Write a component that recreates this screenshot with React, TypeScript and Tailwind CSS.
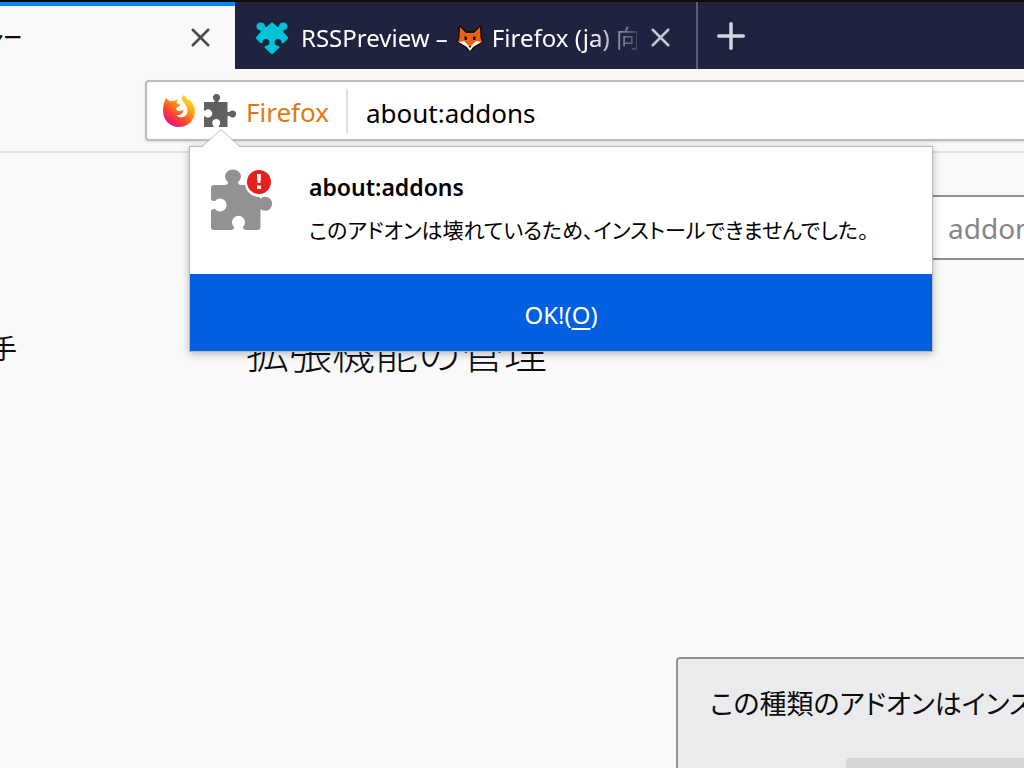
import { useState } from 'react'
import { Plus, X } from 'lucide-react'

const latin = "font-['Noto_Sans','Noto_Sans_CJK_JP',sans-serif]"
const japanese = "font-['Noto_Sans_CJK_JP',sans-serif] [font-feature-settings:'palt']"

function PuzzleIcon() {
  return (
    <svg viewBox="0 0 33 33" className="size-[33px]" fill="#606060">
      <path d="M1 8H11.500V6.500A3.600 3.600 0 1 1 15.500 6.500V8H24.500V18H26.500A3.600 3.600 0 1 1 26.500 22H24.500V33H16V31.800A4 4 0 1 0 10.500 31.800V33H1V22.500H2.500A4 4 0 1 0 2.500 16.500H1z" />
    </svg>
  )
}

function BrokenAddonIcon() {
  return (
    <svg viewBox="0 0 62 62" className="size-[62px] shrink-0">
      <path
        fill="#929292"
        d="M0 19q0-3 3-3H14q3 0 3-3A8 7 0 1 1 27 13q0 3 3 3H46q3 0 3 3V30A7 7 0 1 1 49.500 40V58q0 3-3 3H35q-3 0-3-3A6.500 6.500 0 1 0 23 58q0 3-3 3H3q-3 0-3-3V42q0-2 4-2A6.500 6.500 0 1 0 4 32Q0 32 0 30z"
      />
      <circle cx="48" cy="14" r="14" fill="#fff" />
      <circle cx="48" cy="13" r="12" fill="#e6201b" />
      <path d="M46 5h4l-.5 9h-3zM46 16.500h4v3.500h-4z" fill="#fff" />
    </svg>
  )
}

function FirefoxLogo() {
  return (
    <svg viewBox="0 0 32 32" className="size-8">
      <defs>
        <linearGradient id="flame" x1="0.85" y1="0.1" x2="0.25" y2="0.95">
          <stop offset="0" stopColor="#ffe226" />
          <stop offset="0.35" stopColor="#ff9a16" />
          <stop offset="0.65" stopColor="#ff4a2e" />
          <stop offset="1" stopColor="#e3127f" />
        </linearGradient>
      </defs>
      <path
        fill="url(#flame)"
        d="M20 0c3 1.500 4 3.500 5 5.500l1-1.500c4 4 6 8 6 12 0 9-7 16-16 16S0 25 0 16C0 11 1 7 3 3l4 3.500c1.500-.8 3-1 4.500-.7L14.500 4l-1 3.500c.8 1.200 1.500 1.800 4 1.800l-.8 1.700-3.500 2c0 1.500.5 2.500 2 3 2.500.2 3.300-1.500 5.500-.5l-1.200 2.500c-1.500 2-4 2.500-6.500 2 2.500 3 7 3 9.800.5 2.200-2.300 2.200-6 .5-9.500-1-2-2.800-3.500-3.800-5.500C18.500 4 19 2 20 0z"
      />
    </svg>
  )
}

function RssPreviewIcon() {
  return (
    <svg viewBox="0 0 34 34" className="size-[34px] shrink-0" fill="#00c3d7">
      <path d="M17 1l5 4.500c1.500.7 2.200.2 2.200-1C24.500 2.500 26 1.500 28 1.500c3 0 4.500 1.500 4.500 4 0 2-1.200 3.200-3 3.500-1.200.3-1.700 1.200-.9 2.200L33.500 17l-4.800 5c-1 .8-2 .2-2.200-1.200-.4-1.800-1.700-2.800-3.500-2.800-2 0-3.500 1.300-3.500 3.300s1.300 3.200 3.200 3.500c1.500.2 2.300 1.200 1.300 2.200L17 33.500 10 27c-1-1-.2-2 1.300-2.200 1.900-.3 3.200-1.500 3.200-3.500S13 18 11 18c-1.800 0-3.100 1-3.500 2.800-.2 1.400-1.200 2-2.200 1.200L.5 17l4.900-5.800c.8-1 .3-1.900-.9-2.200-1.800-.3-3-1.500-3-3.500 0-2.500 1.500-4 4.500-4 2 0 3.500 1 3.800 3 0 1.200.7 1.700 2.200 1z" />
    </svg>
  )
}

function FoxIcon() {
  return (
    <svg viewBox="0 0 28 28" className="size-7 shrink-0">
      <path d="M4 1l7 6h6l7-6 2 2v11l2 4-8 5-4 4h-4l-4-4-8-5 2-4V3z" fill="#111" />
      <path d="M4 3l6 6h8l6-6 .5 11 1.500 4-8 4-4 4-4-4-8-4 1.500-4z" fill="#f25f0d" />
      <path d="M3 18l5-1 6 6 6-6 5 1-8 5-3 4-3-4z" fill="#fff" />
      <path d="M8.500 12l2.500 1v3H8.500zM17 13l2.500-1v4H17zM12.500 22h3L14 24z" fill="#111" />
    </svg>
  )
}

function InstallFailedPopup({ onClose }: { onClose: () => void }) {
  return (
    <div
      role="dialog"
      aria-labelledby="popup-title"
      className="absolute -left-[14px] top-[52px] z-10 w-[744px] border border-[#b8b8b8] bg-white shadow-[0_2px_8px_rgba(0,0,0,0.25)]"
    >
      <svg viewBox="0 0 38 19" className="absolute left-3 -top-[19px] h-[20px] w-[38px]">
        <path d="M0 19L19 1l19 18z" fill="#fff" />
        <path d="M0 18L19 1l19 17" fill="none" stroke="#bdbdbd" />
      </svg>
      <div className="flex h-[127px] gap-9 pl-[21px] pt-[22px]">
        <BrokenAddonIcon />
        <div className="pt-[2px]">
          <h2 id="popup-title" className="text-[23px] leading-8 font-semibold text-black">
            about:addons
          </h2>
          <p className={`mt-2 text-[21px] leading-9 whitespace-nowrap text-black ${japanese}`}>
            このアドオンは壊れているため、インストールできませんでした。
          </p>
        </div>
      </div>
      <button
        onClick={onClose}
        className="block h-[77px] w-full bg-[#0060df] pt-1 text-center text-[24px] text-white"
      >
        OK!(<span className="underline decoration-2 underline-offset-4">O</span>)
      </button>
    </div>
  )
}

export default function App() {
  const [popupOpen, setPopupOpen] = useState(true)

  return (
    <div className={`flex h-screen flex-col overflow-hidden bg-[#f9f9fa] text-[#0c0c0d] ${latin}`}>
      <nav className="flex h-[69px] shrink-0 border-t-2 border-[#0c0c0d] bg-[#202340]">
        <div className="flex w-[235px] shrink-0 items-center border-t-4 border-[#0a84ff] bg-[#f9f9fa]">
          <div className="flex w-[22px] justify-end overflow-hidden">
            <span className={`text-[19px] font-medium whitespace-nowrap ${japanese}`}>アドオンマネージャー</span>
          </div>
          <button aria-label="タブを閉じる" className="ml-[163px]">
            <X className="size-[31px] text-[#4a4a4f]" strokeWidth={2} />
          </button>
        </div>
        <div className="flex w-[463px] shrink-0 items-center border-r-2 border-[#5d5f77] pl-5 pt-1 text-white">
          <RssPreviewIcon />
          <div className="ml-3 flex w-[336px] items-center overflow-hidden text-[24px] whitespace-nowrap [mask-image:linear-gradient(to_right,black_290px,transparent_345px)]">
            RSSPreview –
            <span className="mx-2"><FoxIcon /></span>
            Firefox (ja) 向け
          </div>
          <button aria-label="タブを閉じる" className="ml-2">
            <X className="size-[31px] text-[#c5c6d0]" strokeWidth={2} />
          </button>
        </div>
        <button aria-label="新しいタブ" className="ml-3">
          <Plus className="size-[42px] text-[#d5d6de]" strokeWidth={2} />
        </button>
      </nav>

      <header className="flex h-[84px] shrink-0 items-start border-b-2 border-[#e0e0e1] pt-[11px] pl-[145px]">
        <div className="flex h-[61px] flex-1 items-center rounded-l-sm border-2 border-r-0 border-[#bdbdbd] bg-white pl-4 shadow-sm">
          <FirefoxLogo />
          <div className="relative ml-2">
            <button aria-label="アドオンのインストール" className="block">
              <PuzzleIcon />
            </button>
            {popupOpen && <InstallFailedPopup onClose={() => setPopupOpen(false)} />}
          </div>
          <span className="ml-[10px] w-[84px] pt-1 text-[26px] text-[#e07a10]">Firefox</span>
          <input
            aria-label="アドレス"
            defaultValue="about:addons"
            className="ml-4 h-11 min-w-0 flex-1 border-l-2 border-[#e0e0e0] pl-[18px] pt-1 text-[26px] text-black outline-none"
          />
        </div>
      </header>

      <div className="flex min-h-0 flex-1">
        <aside className="w-[246px] shrink-0 pt-[177px]">
          <a href="#discover" className="flex w-[17px] justify-end overflow-hidden">
            <span className="text-[27px] leading-9 whitespace-nowrap font-['Noto_Sans_CJK_JP',sans-serif]">入手</span>
          </a>
        </aside>
        <main className="flex min-w-0 flex-1 flex-col pt-[42px]">
          <input
            type="text"
            aria-label="アドオンを検索"
            placeholder="addons.mozilla.org を検索"
            className="ml-[674px] h-[65px] w-[420px] shrink-0 border-2 border-[#8f8f91] bg-white pl-[26px] text-[28px] placeholder:text-[#858585] placeholder:opacity-100"
          />
          <h1 className="mt-[58px] text-[43px] leading-[64px] font-light font-['Noto_Sans_CJK_JP',sans-serif]">
            拡張機能の管理
          </h1>
          <section className="mt-[275px] ml-[430px] flex-1 overflow-hidden rounded-tl-sm border-2 border-r-0 border-b-0 border-[#939395] bg-[#ebebed] pt-6 pl-8">
            <p className={`text-[27px] leading-10 whitespace-nowrap ${japanese}`}>
              この種類のアドオンはインストールされていません
            </p>
            <button aria-label="アドオンの詳細" className="mt-[35px] ml-[136px] block h-16 w-full rounded-tl-sm bg-[#d5d5d7]" />
          </section>
        </main>
      </div>
    </div>
  )
}
